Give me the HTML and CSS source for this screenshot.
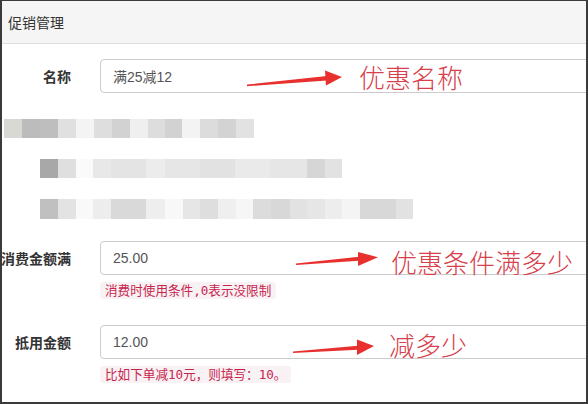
FILE: index.html
```html
<html>
<head>
<meta charset="utf-8">
<title>促销管理</title>
<link rel="stylesheet" href="styles.css">
</head>
<body>

<div class="frame">
	<div class="panel-heading">促销管理</div>

	<div class="panel-body">
		<div class="form-group">
			<label class="control-label">名称</label>
			<input type="text" class="form-control" value="满25减12" />
		</div>

		<div class="mosaic">
			<div class="blur row1"></div>
			<div class="blur row2"></div>
			<div class="blur row3"></div>
		</div>

		<div class="form-group with-help">
			<label class="control-label">消费金额满</label>
			<div class="field">
				<input type="text" class="form-control" value="25.00" />
				<p class="help"><code>消费时使用条件,0表示没限制</code></p>
			</div>
		</div>

		<div class="form-group with-help">
			<label class="control-label">抵用金额</label>
			<div class="field">
				<input type="text" class="form-control" value="12.00" />
				<p class="help"><code>比如下单减10元，则填写：10。</code></p>
			</div>
		</div>
	</div>
</div>

<!-- annotations drawn over the screenshot -->
<svg class="marks" width="588" height="404" viewBox="0 0 588 404">
	<g fill="#e8302f">
		<polygon points="247,84.6 327,76 327,80.4 247,86.2" />
		<polygon points="325,70.5 342,77 326,85.5" />
		<polygon points="296,263.4 359,256.8 359,260.8 296,265" />
		<polygon points="358,252 378,257.2 358,266" />
		<polygon points="293,351.4 358,345.8 358,349.8 293,353" />
		<polygon points="357,339.5 374,346 357,355" />
	</g>
</svg>
<div class="note note1">优惠名称</div>
<div class="note note2">优惠条件满多少</div>
<div class="note note3">减多少</div>

</body>
</html>
```

FILE: styles.css
```css
body {margin: 0; position: relative; background: #fff; font-family: "Noto Sans CJK SC", "Liberation Sans", sans-serif; font-size: 14px; color: #333;}
.frame {width: 588px; height: 404px; box-sizing: border-box; border: 2px solid #3a3a3a; border-top-width: 1px; overflow: hidden; background: #fff;}

.panel-heading {height: 42px; line-height: 42px; padding-left: 6px; background: #f5f5f5; border-bottom: 1px solid #ddd; font-size: 14px; color: #333;}
.panel-body {padding-top: 15px;}

.form-group {display: flex; align-items: flex-start; gap: 29px;}
.control-label {width: 69px; flex: none; display: flex; justify-content: flex-end; white-space: nowrap; font-weight: bold; line-height: 34px; color: #333;}
.field {flex: none;}
.form-control {display: block; flex: none; width: 520px; height: 34px; box-sizing: border-box; margin: 0; padding: 6px 12px; border: 1px solid #ccc; border-radius: 4px; font-family: "Liberation Sans", "Noto Sans CJK SC", sans-serif; font-size: 14px; color: #555; background: #fff;}
.help {margin: 7px 0 0 0; line-height: 18px;}
code {font-family: "DejaVu Sans Mono", "Noto Sans CJK SC", monospace; font-size: 12.6px; color: #c7254e; background: #f9f2f4; padding: 1px 5px; border-radius: 3px;}
.with-help {margin-top: 22px;}
.with-help + .with-help {margin-top: 25px;}

.mosaic {padding-top: 26px; display: flex; flex-direction: column; gap: 21px;}
.blur {height: 19px;}
.row1 {margin-left: 2px; width: 250px;
	background: linear-gradient(to right, #d8d8d4 0 18px, #bcbcbc 18px 36px, #bebebe 36px 54px, #e0e0e0 54px 72px, #f4f4f4 72px 90px, #dedede 90px 108px, #d2d2d2 108px 126px, #efefef 126px 144px, #dddddd 144px 161px, #d2d2d2 161px 178px, #f3f3f3 178px 196px, #dcdcdc 196px 214px, #d3d3d3 214px 232px, #e2e2e2 232px 250px);}
.row2 {margin-left: 38px; width: 302px;
	background: linear-gradient(to right, #a8a8a8 0 18px, #dfdfdf 18px 36px, #fafafa 36px 53px, #e8e8e8 53px 71px, #e4e4e4 71px 106px, #ececec 106px 125px, #e6e6e6 125px 160px, #e2e2e2 160px 195px, #eaeaea 195px 230px, #e6e6e6 230px 267px, #d6d6d6 267px 285px, #e2e2e2 285px 302px);}
.row3 {margin-left: 38px; width: 373px; height: 20px;
	background: linear-gradient(to right, #c0c0c0 0 18px, #e3e3e3 18px 36px, #f9f9f9 36px 53px, #ededed 53px 71px, #d9d9d9 71px 106px, #eeeeee 106px 125px, #f8f8f8 125px 143px, #e6e6e6 143px 160px, #dedede 160px 178px, #efefef 178px 196px, #f6f6f6 196px 213px, #dcdcdc 213px 231px, #d8d8d8 231px 250px, #e2e2e2 250px 267px, #e6e6e6 267px 285px, #ededed 285px 302px, #f4f4f4 302px 320px, #d8d8d8 320px 356px, #e2e2e2 356px 373px);}

.marks {position: absolute; top: 0; left: 0;}
.note {position: absolute; font-size: 26px; line-height: 26px; font-weight: 300; color: #d6404a; white-space: nowrap;}
.note1 {left: 359px; top: 64px;}
.note2 {left: 391px; top: 249px;}
.note3 {left: 389px; top: 332px;}
```
